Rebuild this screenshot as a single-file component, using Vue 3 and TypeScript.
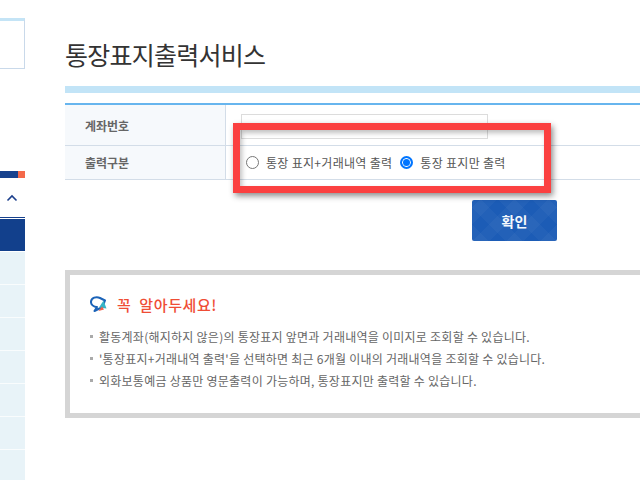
<script setup lang="ts">
const menuRows = [1, 2, 3, 4, 5, 6, 7]
const notes = [
  '활동계좌(해지하지 않은)의 통장표지 앞면과 거래내역을 이미지로 조회할 수 있습니다.',
  "'통장표지+거래내역 출력'을 선택하면 최근 6개월 이내의 거래내역을 조회할 수 있습니다.",
  '외화보통예금 상품만 영문출력이 가능하며, 통장표지만 출력할 수 있습니다.',
]
</script>

<template>
  <div class="page">
    <aside class="side">
      <div class="side-box"></div>
      <div class="side-bar"><span></span></div>
      <div class="side-head">
        <svg width="12" height="8" viewBox="0 0 12 8"><path d="M1.5 6.5 6 2l4.5 4.5" fill="none" stroke="#1c3f8c" stroke-width="1.6" /></svg>
      </div>
      <div class="side-active"></div>
      <div v-for="r in menuRows" :key="r" class="side-row"></div>
    </aside>

    <main class="main">
      <h1 class="title">통장표지출력서비스</h1>
      <div class="band"></div>
      <div class="form">
        <div class="row row-a">
          <div class="th">계좌번호</div>
          <div class="td"><div class="input"></div></div>
        </div>
        <div class="row row-b">
          <div class="th">출력구분</div>
          <div class="td radios">
            <label class="radio"><span class="dot"></span>통장 표지+거래내역 출력</label>
            <label class="radio"><span class="dot on"></span>통장 표지만 출력</label>
          </div>
        </div>
      </div>
      <div class="actions"><button class="ok">확인</button></div>
      <section class="notice">
        <h2 class="notice-title">
          <svg width="18" height="18" viewBox="0 0 18 18">
            <path d="M12.500 11 15 4.500 10 2C6 0 1.500 2 1 5.500.7 8.500 3.500 11 7 11L4.500 15l6-3z" fill="none" stroke="#1b63b8" stroke-width="2" stroke-linejoin="round" />
            <path d="M9 11.500 13.500 4.500 16.500 12.500z" fill="#38b4c6" />
            <path d="M8.500 15 12 10.500 14 13.500z" fill="#f0604a" />
          </svg>
          <span>꼭 &nbsp;알아두세요!</span>
        </h2>
        <ul class="notes">
          <li v-for="n in notes" :key="n">{{ n }}</li>
        </ul>
      </section>
    </main>

    <div class="callout"></div>
  </div>
</template>

<style>
html, body { margin: 0; background: #fff; overflow: hidden; }
</style>

<style scoped>
.page {
  position: relative;
  display: flex;
  width: 640px;
  height: 480px;
  overflow: hidden;
  font-family: "Noto Sans CJK KR", "Noto Sans", sans-serif;
  color: #555;
}
.side { width: 25px; flex: none; padding-top: 18px; }
.side-box {
  box-sizing: border-box;
  height: 51px;
  border: 1px solid #c9d9ea;
  border-top: 3px solid #c4e4f6;
  border-left: 0;
}
.side-bar {
  margin-top: 102px;
  height: 7px;
  background: #17418d;
  display: flex;
  justify-content: flex-end;
}
.side-bar span { width: 7px; background: #f4694a; }
.side-head {
  height: 40px;
  display: flex;
  justify-content: flex-end;
  align-items: center;
  padding-right: 7px;
  border-bottom: 1px solid #17418d;
  margin-bottom: 1px;
  box-sizing: border-box;
}
.side-active { height: 32px; background: #12408c; margin-bottom: 1px; }
.side-row {
  box-sizing: border-box;
  height: 33px;
  background: #e8f3f8;
  border-bottom: 1px solid #f9fcfd;
}
.main { flex: none; width: 615px; padding: 37px 0 0 40px; box-sizing: border-box; }
.title {
  margin: 0;
  font-size: 25px;
  line-height: 34px;
  font-weight: 400;
  color: #333;
  letter-spacing: -0.75px;
}
.band { margin-top: 15px; height: 7px; background: #c2e4f7; }
.form {
  margin-top: 10px;
  width: 600px;
  border-top: 2px solid #67b5ee;
  border-bottom: 1px solid #d3dde8;
}
.row { display: flex; }
.row-a { height: 40px; border-bottom: 1px solid #d3dde8; }
.row-b { height: 33px; }
.th {
  width: 161px;
  flex: none;
  box-sizing: border-box;
  padding-left: 20px;
  display: flex;
  align-items: center;
  background: #f6f9fc;
  border-right: 1px solid #d3dde8;
  font-size: 12px;
  font-weight: 700;
  color: #666;
}
.td { flex: 1; display: flex; align-items: center; padding-left: 15px; }
.input {
  width: 245px;
  height: 23px;
  margin-top: 2px;
  border: 1px solid #dcdcdc;
}
.radios { gap: 8px; padding-left: 20px; font-size: 12px; color: #555; letter-spacing: 0.3px; }
.radio { display: flex; align-items: center; gap: 7px; }
.dot {
  box-sizing: border-box;
  width: 13px;
  height: 13px;
  border: 1px solid #777;
  border-radius: 50%;
  background: #fff;
}
.dot.on { border: 2px solid #0075ff; box-shadow: inset 0 0 0 1px #fff; background: #0075ff; }
.actions { display: flex; padding: 20px 0 0 407px; }
.ok {
  width: 85px;
  height: 41px;
  border: 0;
  border-radius: 2px;
  background:
    repeating-linear-gradient(45deg, rgba(255, 255, 255, 0.03) 0 12px, transparent 12px 24px),
    repeating-linear-gradient(-45deg, rgba(255, 255, 255, 0.03) 0 12px, transparent 12px 24px),
    #1c5cb6;
  color: #f4f8fd;
  font: 700 14px "Noto Sans CJK KR", sans-serif;
}
.notice {
  margin-top: 29px;
  width: 600px;
  height: 148px;
  box-sizing: border-box;
  border: 5px solid #d5d5d5;
  padding: 20px 0 0 20px;
}
.notice-title {
  margin: 0;
  display: flex;
  align-items: center;
  gap: 9px;
  font-size: 15px;
  line-height: 20px;
  font-weight: 500;
  letter-spacing: 0.6px;
  color: #ef4d35;
}
.notes { margin: 11px 0 0; padding: 0; list-style: none; }
.notes li {
  position: relative;
  padding-left: 9px;
  font-size: 12px;
  line-height: 22px;
  letter-spacing: 0.25px;
  color: #666;
  white-space: nowrap;
}
.notes li::before {
  content: "";
  position: absolute;
  left: 0;
  top: 9px;
  width: 3px;
  height: 3px;
  background: #aaa;
}
.callout {
  position: absolute;
  left: 233px;
  top: 123px;
  width: 318px;
  height: 70px;
  box-sizing: border-box;
  border: 7px solid #fb4040;
  box-shadow: 2px 3px 6px rgba(0, 0, 0, 0.45), inset 2px 3px 5px rgba(0, 0, 0, 0.25);
}
</style>
